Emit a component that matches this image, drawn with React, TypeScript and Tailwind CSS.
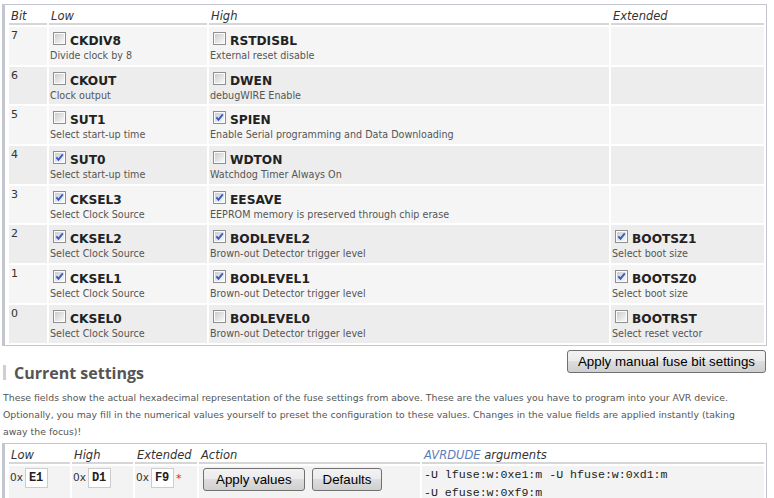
import React from "react";

type Fuse = { name: string; desc: string; on: boolean } | null;

const rows: { bit: number; low: Fuse; high: Fuse; ext: Fuse }[] = [
  {
    bit: 7,
    low: { name: "CKDIV8", desc: "Divide clock by 8", on: false },
    high: { name: "RSTDISBL", desc: "External reset disable", on: false },
    ext: null,
  },
  {
    bit: 6,
    low: { name: "CKOUT", desc: "Clock output", on: false },
    high: { name: "DWEN", desc: "debugWIRE Enable", on: false },
    ext: null,
  },
  {
    bit: 5,
    low: { name: "SUT1", desc: "Select start-up time", on: false },
    high: { name: "SPIEN", desc: "Enable Serial programming and Data Downloading", on: true },
    ext: null,
  },
  {
    bit: 4,
    low: { name: "SUT0", desc: "Select start-up time", on: true },
    high: { name: "WDTON", desc: "Watchdog Timer Always On", on: false },
    ext: null,
  },
  {
    bit: 3,
    low: { name: "CKSEL3", desc: "Select Clock Source", on: true },
    high: { name: "EESAVE", desc: "EEPROM memory is preserved through chip erase", on: true },
    ext: null,
  },
  {
    bit: 2,
    low: { name: "CKSEL2", desc: "Select Clock Source", on: true },
    high: { name: "BODLEVEL2", desc: "Brown-out Detector trigger level", on: true },
    ext: { name: "BOOTSZ1", desc: "Select boot size", on: true },
  },
  {
    bit: 1,
    low: { name: "CKSEL1", desc: "Select Clock Source", on: true },
    high: { name: "BODLEVEL1", desc: "Brown-out Detector trigger level", on: true },
    ext: { name: "BOOTSZ0", desc: "Select boot size", on: true },
  },
  {
    bit: 0,
    low: { name: "CKSEL0", desc: "Select Clock Source", on: false },
    high: { name: "BODLEVEL0", desc: "Brown-out Detector trigger level", on: false },
    ext: { name: "BOOTRST", desc: "Select reset vector", on: false },
  },
];

function Box({ on }: { on: boolean }) {
  return (
    <svg width="13" height="13" viewBox="0 0 13 13" className="shrink-0 ml-[3px] mr-[4px]">
      <defs>
        <linearGradient id="cbFill" x1="0" y1="0" x2="1" y2="1">
          <stop offset="0" stopColor="#cbcdd0" />
          <stop offset="1" stopColor="#f8f8f8" />
        </linearGradient>
      </defs>
      <rect x="0.5" y="0.5" width="12" height="12" fill="#fbfbfb" stroke="#8e8f8f" />
      <rect x="2" y="2" width="9" height="9" fill="url(#cbFill)" />
      {on && (
        <path d="M3.3 6.3 L5.5 8.7 L9.8 3.4" fill="none" stroke="#3b5cc0" strokeWidth="1.9" />
      )}
    </svg>
  );
}

function FuseCell({ f, bg }: { f: Fuse; bg: string }) {
  return (
    <td className={`align-top pl-[1px] pt-[5px] ${bg}`}>
      {f && (
        <>
          <div className="flex items-baseline leading-[16px]">
            <Box on={f.on} />
            <span className="text-[12.2px] font-bold text-[#222]">{f.name}</span>
          </div>
          <div className="text-[9.6px] leading-[13px] text-[#555] whitespace-nowrap">{f.desc}</div>
        </>
      )}
    </td>
  );
}

const thCls =
  "text-left font-normal italic text-[11.5px] leading-[14px] pt-[2px] pl-[2px] border-b-2 border-[#d6d6d6] text-[#333]";

function Button({ children, px }: { children: React.ReactNode; px: string }) {
  return (
    <button
      className={`h-[23px] ${px} rounded-[3px] border border-[#707070] bg-[linear-gradient(#f2f2f2,#ebebeb_50%,#dddddd_50%,#cfcfcf)] font-['Liberation_Sans',Arial,sans-serif] text-[13.33px] leading-[21px] text-black`}
    >
      {children}
    </button>
  );
}

function HexField({ value, star }: { value: string; star?: boolean }) {
  return (
    <div className="flex items-center pl-[1px] pt-[2px]">
      <span className="text-[10.5px] text-[#333] mr-[2px]">0x</span>
      <span className="w-[23px] h-[20px] border border-[#cdcdcd] bg-white pl-[3px] font-['Liberation_Mono',monospace] font-bold text-[12px] leading-[18px] text-[#222]">
        {value}
      </span>
      {star && <span className="ml-[2px] self-start mt-[3px] text-[11px] text-[#dd2222]">*</span>}
    </div>
  );
}

export default function App() {
  return (
    <div className="w-[774px] h-[498px] overflow-hidden bg-white font-['DejaVu_Sans',Verdana,sans-serif] text-[#333]">
      {/* fuse bit table */}
      <div className="mt-[4px] ml-[2px] w-[765px] border border-l-[3px] border-[#c3c6ce] pl-[2px]">
        <table className="table-fixed border-separate border-spacing-[2px] w-[759px]">
          <thead>
            <tr>
              <th className={`${thCls} w-[38px]`}>Bit</th>
              <th className={`${thCls} w-[158px]`}>Low</th>
              <th className={`${thCls} w-[400px]`}>High</th>
              <th className={`${thCls} w-[153px]`}>Extended</th>
            </tr>
          </thead>
          <tbody>
            {rows.map((r, i) => {
              const bg = i % 2 === 0 ? "bg-[#f5f5f5]" : "bg-[#ededed]";
              return (
                <tr key={r.bit} className="h-[37.7px]">
                  <td className={`align-top pl-[2px] pt-[2px] text-[11px] leading-[14px] ${bg}`}>{r.bit}</td>
                  <FuseCell f={r.low} bg={bg} />
                  <FuseCell f={r.high} bg={bg} />
                  <FuseCell f={r.ext} bg={bg} />
                </tr>
              );
            })}
          </tbody>
        </table>
      </div>

      {/* heading + manual apply */}
      <div className="flex justify-between">
        <div className="mt-[17px] flex items-center">
          <span className="ml-[3px] w-[3px] h-[15px] bg-[#cfcfcf]" />
          <span className="ml-[8px] font-['Open_Sans',sans-serif] font-bold text-[16px] leading-[20px] text-[#555]">
            Current settings
          </span>
        </div>
        <div className="mt-[3px] mr-[8px]">
          <Button px="px-[10px]">Apply manual fuse bit settings</Button>
        </div>
      </div>

      <div className="mt-[6px] pl-[3px] text-[9.35px] leading-[17px] text-[#555] whitespace-nowrap">
        <div>
          These fields show the actual hexadecimal representation of the fuse settings from above. These are the values you have to program into your AVR device.
        </div>
        <div>
          Optionally, you may fill in the numerical values yourself to preset the configuration to these values. Changes in the value fields are applied instantly (taking
        </div>
        <div>away the focus)!</div>
      </div>

      {/* current values table */}
      <div className="mt-[3px] ml-[2px] w-[765px] border border-l-[3px] border-[#c3c6ce] pl-[2px]">
        <table className="table-fixed border-separate border-spacing-[2px] w-[759px]">
          <thead>
            <tr>
              <th className={`${thCls} w-[61px]`}>Low</th>
              <th className={`${thCls} w-[61px]`}>High</th>
              <th className={`${thCls} w-[62px]`}>Extended</th>
              <th className={`${thCls} w-[221px]`}>Action</th>
              <th className={`${thCls} w-[342px]`}>
                <span className="text-[#5a7cbc]">AVRDUDE</span> arguments
              </th>
            </tr>
          </thead>
          <tbody>
            <tr>
              <td className="align-top bg-[#f3f3f3] h-[40px]">
                <HexField value="E1" />
              </td>
              <td className="align-top bg-[#f3f3f3]">
                <HexField value="D1" />
              </td>
              <td className="align-top bg-[#f3f3f3]">
                <HexField value="F9" star />
              </td>
              <td className="align-top bg-[#f3f3f3]">
                <div className="flex gap-[7px] pl-[4px] pt-[2px]">
                  <Button px="px-[12px]">Apply values</Button>
                  <Button px="px-[10px]">Defaults</Button>
                </div>
              </td>
              <td className="align-top bg-[#f3f3f3] pl-[2px] font-['Liberation_Mono',monospace] text-[11.6px] leading-[18px] text-[#222]">
                <div>-U lfuse:w:0xe1:m -U hfuse:w:0xd1:m</div>
                <div>-U efuse:w:0xf9:m</div>
              </td>
            </tr>
          </tbody>
        </table>
      </div>
    </div>
  );
}
